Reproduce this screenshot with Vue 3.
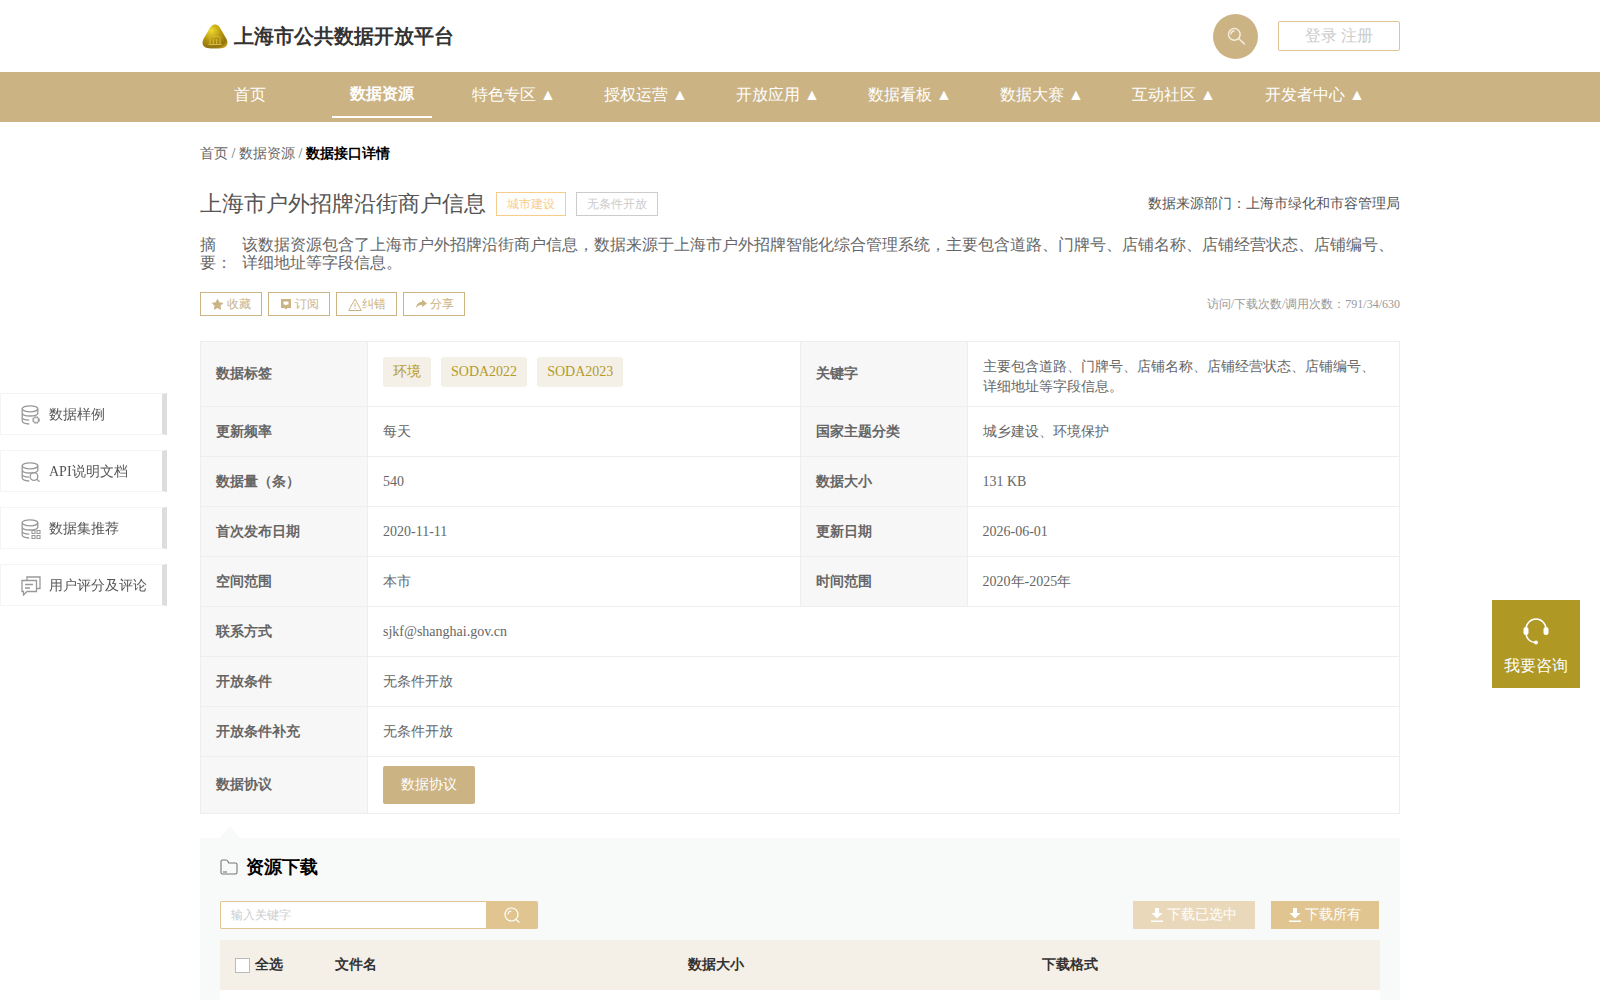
<script setup>
const navItems = ['首页', '数据资源', '特色专区 ▲', '授权运营 ▲', '开放应用 ▲', '数据看板 ▲', '数据大赛 ▲', '互动社区 ▲', '开发者中心 ▲']
const sideItems = [
  { icon: 'gear', label: '数据样例' },
  { icon: 'search', label: 'API说明文档' },
  { icon: 'grid', label: '数据集推荐' },
  { icon: 'chat', label: '用户评分及评论' }
]
const pairRows = [
  ['更新频率', '每天', '国家主题分类', '城乡建设、环境保护'],
  ['数据量（条）', '540', '数据大小', '131 KB'],
  ['首次发布日期', '2020-11-11', '更新日期', '2026-06-01'],
  ['空间范围', '本市', '时间范围', '2020年-2025年']
]
const wideRows = [
  ['联系方式', 'sjkf@shanghai.gov.cn'],
  ['开放条件', '无条件开放'],
  ['开放条件补充', '无条件开放']
]
const tags = ['环境', 'SODA2022', 'SODA2023']
</script>

<template>
  <div class="page">
    <header class="top">
      <div class="brand">
        <svg class="logo" viewBox="0 0 26 25">
          <defs>
            <radialGradient id="gold" cx="0.35" cy="0.25" r="0.9">
              <stop offset="0" stop-color="#f0dc30" />
              <stop offset="0.45" stop-color="#b8960f" />
              <stop offset="0.8" stop-color="#8f7410" />
              <stop offset="1" stop-color="#d2b020" />
            </radialGradient>
          </defs>
          <path d="M13 .5C16 .5 17.500 3 19 5.500L24.500 15C26.500 19 25.500 23 21 24C16 24.800 10 24.800 5 24C.500 23-.5 19 1.500 15L7 5.500C8.500 3 10 .5 13 .5z" fill="url(#gold)" />
          <path d="M6.500 14.500C9 11.500 17 11.500 19.500 14.500M8 15v5M11.300 15v5M14.700 15v5M18 15v5M6.500 20.500h13" stroke="#d8bb3c" stroke-width="1" fill="none" />
        </svg>
        <span class="brand-name">上海市公共数据开放平台</span>
      </div>
      <div class="top-right">
        <div class="search-circle">
          <svg viewBox="0 0 24 24" width="20" height="20" fill="none" stroke="#f3ece0" stroke-width="1.800">
            <circle cx="10" cy="10" r="7" />
            <path d="M6 9.500a4 4 0 0 1 3.500-3.500M15 15l7 6.500" stroke-linecap="round" />
          </svg>
        </div>
        <div class="login">登录 注册</div>
      </div>
    </header>

    <nav class="nav">
      <div class="nav-inner">
        <a v-for="(item, i) in navItems" :key="item" class="nav-item" :class="{ active: i === 1, long: i === 8 }">{{ item }}</a>
      </div>
    </nav>

    <main class="main">
      <div class="crumb">首页 / 数据资源 / <b>数据接口详情</b></div>

      <div class="title-row">
        <h1>上海市户外招牌沿街商户信息</h1>
        <span class="title-tag orange">城市建设</span>
        <span class="title-tag grey">无条件开放</span>
        <span class="source">数据来源部门：上海市绿化和市容管理局</span>
      </div>

      <div class="abstract">
        <div class="abstract-label">摘要：</div>
        <div class="abstract-text">该数据资源包含了上海市户外招牌沿街商户信息，数据来源于上海市户外招牌智能化综合管理系统，主要包含道路、门牌号、店铺名称、店铺经营状态、店铺编号、详细地址等字段信息。</div>
      </div>

      <div class="actions">
        <span class="act">
          <svg viewBox="0 0 12 12" width="13" height="13"><path d="M6 .5l1.700 3.500 3.800.5-2.800 2.700.7 3.800L6 9.200l-3.400 1.800.7-3.800L.5 4.500l3.800-.5z" fill="#cbb384" /></svg>
          收藏
        </span>
        <span class="act">
          <svg viewBox="0 0 12 12" width="12" height="12"><path d="M1 1h10v9H7.500L6 11.500 4.500 10H1z" fill="#cbb384" /><path d="M3.500 3.500h5v3H7L6 7.500 5 6.500H3.500z" fill="#fff" /></svg>
          订阅
        </span>
        <span class="act tight">
          <svg viewBox="0 0 14 13" width="14" height="13" fill="none" stroke="#cbb384"><path d="M7 1l6.300 11.500H.7zM7 5v4M7 10v1" /></svg>
          纠错
        </span>
        <span class="act">
          <svg viewBox="0 0 12 12" width="12" height="12"><path d="M7 1.500L12 5.500 7 9V6.800C4.500 6.800 2.500 7.500 1 10c.3-3.500 2.500-6 6-6.300z" fill="#cbb384" /></svg>
          分享
        </span>
        <span class="counts">访问/下载次数/调用次数：791/34/630</span>
      </div>

      <table class="info">
        <colgroup>
          <col class="c-label" /><col /><col class="c-label" /><col />
        </colgroup>
        <tbody>
          <tr class="first">
            <th>数据标签</th>
            <td><span v-for="t in tags" :key="t" class="tag">{{ t }}</span></td>
            <th>关键字</th>
            <td class="keywords">主要包含道路、门牌号、店铺名称、店铺经营状态、店铺编号、详细地址等字段信息。</td>
          </tr>
          <tr v-for="r in pairRows" :key="r[0]">
            <th>{{ r[0] }}</th><td>{{ r[1] }}</td><th>{{ r[2] }}</th><td>{{ r[3] }}</td>
          </tr>
          <tr v-for="r in wideRows" :key="r[0]">
            <th>{{ r[0] }}</th><td colspan="3">{{ r[1] }}</td>
          </tr>
          <tr class="last">
            <th>数据协议</th>
            <td colspan="3"><span class="agree">数据协议</span></td>
          </tr>
        </tbody>
      </table>

      <section class="download">
        <h2>
          <svg viewBox="0 0 18 16" width="18" height="16" fill="none" stroke="#777" stroke-width="1.100">
            <path d="M1 13.500V2.500C1 1.500 1.500 1 2.500 1h3.500c1 0 1.500.5 2 1.500l.7 1.500h6.800c1 0 1.500.5 1.500 1.500v8c0 1-.5 1.500-1.500 1.500h-13C1.500 15 1 14.500 1 13.500z" />
            <path d="M3 13h4" />
          </svg>
          资源下载
        </h2>

        <div class="tools">
          <div class="searchbox">
            <div class="search-input">输入关键字</div>
            <div class="search-btn">
              <svg viewBox="0 0 16 16" width="16" height="16" fill="none" stroke="#fff" stroke-width="1.200">
                <circle cx="7.500" cy="7.500" r="6.500" />
                <path d="M4 7a3.500 3.500 0 0 1 3-3M12 12.500l3 2.500" stroke-linecap="round" />
              </svg>
            </div>
          </div>
          <div class="dl-btn pale">
            <svg viewBox="0 0 12 14" width="12" height="14" fill="#fff"><path d="M4 0h4v5h3.500L6 10.500.5 5H4zM0 12.500h12V14H0z" /></svg>
            下载已选中
          </div>
          <div class="dl-btn">
            <svg viewBox="0 0 12 14" width="12" height="14" fill="#fff"><path d="M4 0h4v5h3.500L6 10.500.5 5H4zM0 12.500h12V14H0z" /></svg>
            下载所有
          </div>
        </div>

        <div class="file-head">
          <div class="col-check"><span class="checkbox"></span>全选</div>
          <div class="col-name">文件名</div>
          <div class="col-size">数据大小</div>
          <div class="col-format">下载格式</div>
        </div>
        <div class="file-body"></div>
      </section>
    </main>

    <aside class="side">
      <div v-for="s in sideItems" :key="s.label" class="side-item">
        <svg class="side-icon" viewBox="0 0 20 20" fill="none" stroke="#999" stroke-width="1.300">
          <template v-if="s.icon !== 'chat'">
            <ellipse cx="9" cy="3.800" rx="7.800" ry="3" />
            <path d="M1.200 3.800v12c0 1.800 3 3 7 3.200M1.200 8c0 1.700 3.500 3 7.800 3s7.800-1.300 7.800-3M1.200 12.200c0 1.700 3 2.800 7 3M16.800 3.800V9" />
          </template>
          <template v-if="s.icon === 'gear'">
            <circle cx="15" cy="15" r="2.800" stroke-width="2" stroke-dasharray="1.700 .5" />
            <circle cx="15" cy="15" r="1.400" fill="#fff" stroke="none" />
          </template>
          <template v-if="s.icon === 'search'">
            <circle cx="13" cy="14.500" r="3.800" />
            <path d="M15.800 17.300l2.800 2.400" />
          </template>
          <template v-if="s.icon === 'grid'">
            <path d="M11 11.500h3v3h-3zM16 11.500h3v3h-3zM11 16.500h3v3h-3zM16 16.500h3v3h-3z" stroke-width="1.100" />
          </template>
          <template v-if="s.icon === 'chat'">
            <path d="M6 4V1h13v11.500h-3" />
            <path d="M1 4.500h14.500v11H6L2.500 19v-3.500H1z" />
            <path d="M4 8.500h8M4 12h5" />
          </template>
        </svg>
        <span>{{ s.label }}</span>
      </div>
    </aside>

    <div class="consult">
      <svg viewBox="0 0 28 28" width="28" height="28" fill="none" stroke="#fff" stroke-width="1.500">
        <path d="M4 14V12a10 10 0 0 1 20 0v2" />
        <path d="M4 16c0 5 3.500 9 9 9.500" />
        <rect x="1.500" y="10" width="5" height="8" rx="2.500" fill="#fff" stroke="none" />
        <rect x="21.500" y="10" width="5" height="8" rx="2.500" fill="#fff" stroke="none" />
        <circle cx="14" cy="25.500" r="2" fill="#fff" stroke="none" />
      </svg>
      <span>我要咨询</span>
    </div>
  </div>
</template>

<style>
html, body {
  height: 100%;
  overflow: hidden;
}
</style>

<style scoped>
.page {
  font-family: "Liberation Serif", serif;
  color: #666;
  background: #fff;
}
.top {
  width: 1200px;
  height: 72px;
  margin: 0 auto;
  display: flex;
  align-items: center;
  justify-content: space-between;
}
.brand {
  display: flex;
  align-items: center;
}
.logo {
  width: 26px;
  height: 25px;
  margin: 0 6px 0 2px;
}
.brand-name {
  font-size: 20px;
  font-weight: bold;
  color: #333;
}
.top-right {
  display: flex;
  align-items: center;
  gap: 20px;
}
.search-circle {
  width: 45px;
  height: 45px;
  border-radius: 50%;
  background: #cbb384;
  display: flex;
  align-items: center;
  justify-content: center;
}
.login {
  width: 122px;
  height: 30px;
  box-sizing: border-box;
  border: 1px solid #e0c591;
  border-radius: 2px;
  color: #ccc;
  font-size: 16px;
  line-height: 28px;
  text-align: center;
}
.nav {
  height: 50px;
  background: #cbb384;
}
.nav-inner {
  width: 1200px;
  margin: 0 auto;
  display: flex;
  gap: 32px;
}
.nav-item {
  flex: none;
  width: 100px;
  height: 44px;
  margin-bottom: 6px;
  line-height: 46px;
  text-align: center;
  color: #fff;
  font-size: 16px;
  white-space: nowrap;
}
.nav-item.active {
  font-weight: bold;
  line-height: 44px;
  border-bottom: 2px solid #fff;
}
.nav-item.long {
  padding-left: 9px;
}
.main {
  width: 1200px;
  margin: 0 auto;
}
.crumb {
  padding-top: 23px;
  font-size: 14px;
  line-height: 18px;
  color: #666;
}
.crumb b {
  color: #000;
}
.title-row {
  display: flex;
  align-items: center;
  margin-top: 27px;
  height: 28px;
}
h1 {
  margin: 0;
  font-size: 22px;
  font-weight: normal;
  color: #555;
}
.title-tag {
  height: 24px;
  box-sizing: border-box;
  font-size: 12px;
  line-height: 22px;
  padding: 0 10px;
  margin-left: 10px;
}
.title-tag.orange {
  color: #f8cd8c;
  border: 1px solid #f8cd8c;
}
.title-tag.grey {
  color: #ccc;
  border: 1px solid #ccc;
}
.source {
  margin-left: auto;
  font-size: 14px;
  color: #555;
}
.abstract {
  display: flex;
  margin-top: 18px;
  font-size: 16px;
  line-height: 18px;
  color: #666;
}
.abstract-label {
  flex: none;
  width: 32px;
  margin-right: 10px;
}
.actions {
  display: flex;
  align-items: center;
  gap: 6px;
  margin-top: 20px;
}
.act {
  width: 62px;
  height: 24px;
  box-sizing: border-box;
  border: 1px solid #cbb384;
  font-size: 12px;
  color: #cbb384;
  display: flex;
  align-items: center;
  justify-content: center;
  gap: 3px;
}
.act.tight {
  width: 61px;
  gap: 0;
}
.counts {
  margin-left: auto;
  font-size: 12px;
  color: #999;
}
.info {
  width: 1200px;
  margin-top: 25px;
  border-collapse: collapse;
  table-layout: fixed;
  font-size: 14px;
}
.c-label {
  width: 167px;
}
.info th, .info td {
  border: 1px solid #eee;
  height: 50px;
  box-sizing: border-box;
  padding: 0 15px;
  text-align: left;
  color: #666;
}
.info th {
  background: #f7f7f7;
  font-weight: bold;
}
.first th, .first td {
  height: 65px;
}
.last th, .last td {
  height: 57px;
}
.info .keywords {
  line-height: 20px;
  padding-top: 6px;
}
.tag {
  display: inline-block;
  height: 30px;
  line-height: 30px;
  padding: 0 10px;
  margin: 0 10px 4px 0;
  background: #f4efe7;
  color: #b39b2a;
  border-radius: 3px;
}
.agree {
  display: inline-block;
  width: 92px;
  height: 38px;
  line-height: 38px;
  text-align: center;
  background: #cbb384;
  color: #fff;
  border-radius: 2px;
}
.download {
  position: relative;
  margin-top: 24px;
  padding: 0 20px;
  background: #f8f9f9;
}
.download::before {
  content: "";
  position: absolute;
  left: 20px;
  top: -12px;
  border-left: 10px solid transparent;
  border-right: 10px solid transparent;
  border-bottom: 12px solid #f8f9f9;
}
h2 {
  margin: 0 0 5px;
  height: 58px;
  display: flex;
  align-items: center;
  gap: 8px;
  font-size: 18px;
  font-weight: bold;
  color: #000;
}
.tools {
  display: flex;
  align-items: center;
}
.searchbox {
  display: flex;
  margin-right: auto;
}
.search-input {
  width: 266px;
  height: 28px;
  box-sizing: border-box;
  border: 1px solid #e0c591;
  border-right: none;
  border-radius: 2px 0 0 2px;
  background: #fff;
  padding-left: 10px;
  font-size: 12px;
  line-height: 26px;
  color: #ccc;
}
.search-btn {
  width: 52px;
  height: 28px;
  background: #e0c591;
  border-radius: 0 2px 2px 0;
  display: flex;
  align-items: center;
  justify-content: center;
}
.dl-btn {
  height: 28px;
  width: 108px;
  margin-left: 16px;
  margin-right: 1px;
  background: #e0c591;
  color: #fff;
  font-size: 14px;
  display: flex;
  align-items: center;
  justify-content: center;
  gap: 4px;
}
.dl-btn.pale {
  width: 122px;
  background: #e9d8b9;
  margin-right: 0;
}
.file-head {
  display: flex;
  align-items: center;
  height: 50px;
  margin-top: 11px;
  background: #f4efe7;
  font-size: 14px;
  font-weight: bold;
  color: #333;
}
.col-check {
  width: 115px;
  padding-left: 15px;
  box-sizing: border-box;
  display: flex;
  align-items: center;
  gap: 5px;
}
.checkbox {
  width: 15px;
  height: 15px;
  box-sizing: border-box;
  border: 1px solid #bbb;
  background: #fff;
}
.col-name {
  width: 353px;
}
.col-size {
  width: 354px;
}
.file-body {
  height: 60px;
  background: #fff;
}
.side {
  position: fixed;
  left: 0;
  top: 393px;
  display: flex;
  flex-direction: column;
  gap: 15px;
}
.side-item {
  width: 167px;
  height: 42px;
  box-sizing: border-box;
  border: 1px solid #f4f4f4;
  border-right: 5px solid #ddd;
  background: #fff;
  display: flex;
  align-items: center;
  padding-left: 20px;
  padding-top: 2px;
  gap: 8px;
  font-size: 14px;
  color: #555;
}
.side-icon {
  width: 20px;
  height: 20px;
  flex: none;
}
.consult {
  position: fixed;
  left: 1492px;
  top: 600px;
  width: 88px;
  height: 88px;
  box-sizing: border-box;
  padding-top: 17px;
  background: #b09825;
  color: #fff;
  font-size: 16px;
  display: flex;
  flex-direction: column;
  align-items: center;
  gap: 11px;
}
</style>
